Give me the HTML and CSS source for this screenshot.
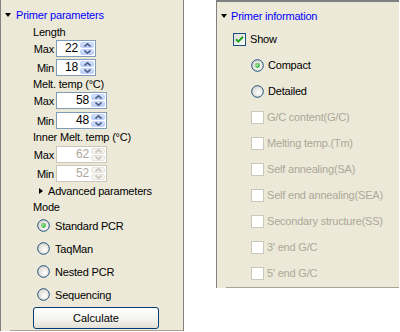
FILE: index.html
```html
<!DOCTYPE html>
<html>
<head>
<meta charset="utf-8">
<link rel="stylesheet" href="styles.css">
</head>
<body>
<div class="panel left">
  <div class="title"><span class="tri-down"></span><span class="ttl">Primer parameters</span></div>
  <div class="group">
    <div class="label first">Length</div>
    <div class="field"><span class="flabel">Max</span>
      <div class="spin"><span class="val">22</span><span class="btns"><span class="b"><svg width="7" height="4" viewBox="0 0 7 4"><path d="M0.5 3.5 L3.5 0.8 L6.5 3.5" fill="none" stroke="#4D6185" stroke-width="1.6"/></svg></span><span class="b"><svg width="7" height="4" viewBox="0 0 7 4"><path d="M0.5 0.5 L3.5 3.2 L6.5 0.5" fill="none" stroke="#4D6185" stroke-width="1.6"/></svg></span></span></div></div>
    <div class="field second"><span class="flabel">Min</span>
      <div class="spin"><span class="val">18</span><span class="btns"><span class="b"><svg width="7" height="4" viewBox="0 0 7 4"><path d="M0.5 3.5 L3.5 0.8 L6.5 3.5" fill="none" stroke="#4D6185" stroke-width="1.6"/></svg></span><span class="b"><svg width="7" height="4" viewBox="0 0 7 4"><path d="M0.5 0.5 L3.5 3.2 L6.5 0.5" fill="none" stroke="#4D6185" stroke-width="1.6"/></svg></span></span></div></div>
    <div class="label">Melt. temp (°C)</div>
    <div class="field"><span class="flabel">Max</span>
      <div class="spin wide"><span class="val">58</span><span class="btns"><span class="b"><svg width="7" height="4" viewBox="0 0 7 4"><path d="M0.5 3.5 L3.5 0.8 L6.5 3.5" fill="none" stroke="#4D6185" stroke-width="1.6"/></svg></span><span class="b"><svg width="7" height="4" viewBox="0 0 7 4"><path d="M0.5 0.5 L3.5 3.2 L6.5 0.5" fill="none" stroke="#4D6185" stroke-width="1.6"/></svg></span></span></div></div>
    <div class="field second wider"><span class="flabel">Min</span>
      <div class="spin wide"><span class="val">48</span><span class="btns"><span class="b"><svg width="7" height="4" viewBox="0 0 7 4"><path d="M0.5 3.5 L3.5 0.8 L6.5 3.5" fill="none" stroke="#4D6185" stroke-width="1.6"/></svg></span><span class="b"><svg width="7" height="4" viewBox="0 0 7 4"><path d="M0.5 0.5 L3.5 3.2 L6.5 0.5" fill="none" stroke="#4D6185" stroke-width="1.6"/></svg></span></span></div></div>
    <div class="label">Inner Melt. temp (°C)</div>
    <div class="field top1"><span class="flabel">Max</span>
      <div class="spin wide dis"><span class="val">62</span><span class="btns"><span class="b"><svg width="7" height="4" viewBox="0 0 7 4"><path d="M0.5 3.5 L3.5 0.8 L6.5 3.5" fill="none" stroke="#C9C7BA" stroke-width="1.6"/></svg></span><span class="b"><svg width="7" height="4" viewBox="0 0 7 4"><path d="M0.5 0.5 L3.5 3.2 L6.5 0.5" fill="none" stroke="#C9C7BA" stroke-width="1.6"/></svg></span></span></div></div>
    <div class="field second"><span class="flabel">Min</span>
      <div class="spin wide dis"><span class="val">52</span><span class="btns"><span class="b"><svg width="7" height="4" viewBox="0 0 7 4"><path d="M0.5 3.5 L3.5 0.8 L6.5 3.5" fill="none" stroke="#C9C7BA" stroke-width="1.6"/></svg></span><span class="b"><svg width="7" height="4" viewBox="0 0 7 4"><path d="M0.5 0.5 L3.5 3.2 L6.5 0.5" fill="none" stroke="#C9C7BA" stroke-width="1.6"/></svg></span></span></div></div>
    <div class="adv"><span class="tri-right"></span>Advanced parameters</div>
    <div class="label mode">Mode</div>
    <div class="radio"><svg class="rb" width="13" height="13" viewBox="0 0 13 13"><defs><radialGradient id="rg" cx="0.6" cy="0.6" r="0.7"><stop offset="0" stop-color="#ffffff"/><stop offset="1" stop-color="#D4D1C3"/></radialGradient><radialGradient id="dot" cx="0.4" cy="0.4" r="0.7"><stop offset="0" stop-color="#9DEB9D"/><stop offset="1" stop-color="#21A121"/></radialGradient></defs><circle cx="6.5" cy="6.5" r="5.8" fill="url(#rg)" stroke="#1C5180" stroke-width="1"/><circle cx="6.5" cy="6.5" r="2.4" fill="url(#dot)"/></svg>Standard PCR</div>
    <div class="radio"><svg class="rb" width="13" height="13" viewBox="0 0 13 13"><circle cx="6.5" cy="6.5" r="5.8" fill="url(#rg)" stroke="#1C5180" stroke-width="1"/></svg>TaqMan</div>
    <div class="radio"><svg class="rb" width="13" height="13" viewBox="0 0 13 13"><circle cx="6.5" cy="6.5" r="5.8" fill="url(#rg)" stroke="#1C5180" stroke-width="1"/></svg>Nested PCR</div>
    <div class="radio"><svg class="rb" width="13" height="13" viewBox="0 0 13 13"><circle cx="6.5" cy="6.5" r="5.8" fill="url(#rg)" stroke="#1C5180" stroke-width="1"/></svg>Sequencing</div>
  </div>
  <div class="btnrow"><button class="calc">Calculate</button></div>
  <div class="sep"></div>
</div>

<div class="panel right">
  <div class="title"><span class="tri-down"></span><span class="ttl">Primer information</span></div>
  <div class="rows">
    <div class="row show"><svg class="cb" width="13" height="13" viewBox="0 0 13 13"><defs><linearGradient id="cbg" x1="0" y1="0" x2="1" y2="1"><stop offset="0" stop-color="#DCDBD3"/><stop offset="1" stop-color="#ffffff"/></linearGradient></defs><rect x="0.5" y="0.5" width="12" height="12" fill="url(#cbg)" stroke="#1C5180"/><path d="M3 6.2 L5.3 8.6 L10 3.8" fill="none" stroke="#21A121" stroke-width="2"/></svg>Show</div>
    <div class="row sub"><svg class="rb" width="13" height="13" viewBox="0 0 13 13"><circle cx="6.5" cy="6.5" r="5.8" fill="url(#rg)" stroke="#1C5180" stroke-width="1"/><circle cx="6.5" cy="6.5" r="2.4" fill="url(#dot)"/></svg>Compact</div>
    <div class="row sub"><svg class="rb" width="13" height="13" viewBox="0 0 13 13"><circle cx="6.5" cy="6.5" r="5.8" fill="url(#rg)" stroke="#1C5180" stroke-width="1"/></svg>Detailed</div>
    <div class="row sub dis"><span class="dbox"></span>G/C content(G/C)</div>
    <div class="row sub dis"><span class="dbox"></span>Melting temp.(Tm)</div>
    <div class="row sub dis"><span class="dbox"></span>Self annealing(SA)</div>
    <div class="row sub dis"><span class="dbox"></span>Self end annealing(SEA)</div>
    <div class="row sub dis"><span class="dbox"></span>Secondary structure(SS)</div>
    <div class="row sub dis"><span class="dbox"></span>3' end G/C</div>
    <div class="row sub dis"><span class="dbox"></span>5' end G/C</div>
  </div>
  <div class="sep"></div>
</div>
</body>
</html>
```

FILE: styles.css
```css
html, body {
  margin: 0;
  padding: 0;
  background: #ffffff;
}
body {
  display: flex;
  align-items: flex-start;
  font-family: "Liberation Sans", Arial, sans-serif;
  font-size: 11px;
  letter-spacing: -0.2px;
  color: #000;
  width: 400px;
  height: 332px;
  overflow: hidden;
}
.panel {
  background: #ECE9D8;
  box-sizing: border-box;
  display: flex;
  flex-direction: column;
  flex-shrink: 0;
}
.panel > *,
.group > *,
.rows > * {
  flex-shrink: 0;
}
.left {
  width: 184px;
  height: 331px;
  border-left: 1px solid #808080;
  border-right: 1px solid #808080;
}
.right {
  margin-left: 32px;
  width: 183px;
  height: 288px;
  border-left: 1px solid #808080;
  border-top: 2px solid #808080;
}
.title {
  display: flex;
  align-items: center;
  height: 16px;
  margin-top: 7px;
}
.right .title {
  margin-top: 6px;
}
.tri-down {
  width: 0;
  height: 0;
  border-left: 3.5px solid transparent;
  border-right: 3.5px solid transparent;
  border-top: 4px solid #000;
  margin-left: 4px;
  margin-right: 5px;
}
.right .tri-down {
  margin-left: 4px;
  margin-right: 4px;
}
.ttl {
  color: #0000FF;
}
.group {
  padding-left: 32px;
  display: flex;
  flex-direction: column;
}
.label {
  height: 16px;
  line-height: 16px;
}
.label.first {
  margin-top: 1px;
}
.field {
  display: flex;
  align-items: center;
  height: 17px;
}
.field.second {
  margin-top: 2px;
}
.field.second.wider {
  margin-top: 3px;
}
.field.top1 {
  margin-top: 1px;
}
.flabel {
  width: 21px;
  text-align: right;
  margin-right: 2px;
}
.spin {
  box-sizing: border-box;
  width: 40px;
  height: 17px;
  border: 1px solid #7F9DB9;
  background: #fff;
  display: flex;
}
.spin.wide {
  width: 51px;
}
.val {
  flex: 1;
  text-align: right;
  line-height: 15px;
  padding-right: 2px;
  font-size: 12px;
}
.btns {
  width: 14px;
  display: flex;
  flex-direction: column;
  padding: 1px 1px 1px 0;
  gap: 1px;
}
.b {
  flex: 1;
  display: flex;
  align-items: center;
  justify-content: center;
  border-radius: 2px;
  background: linear-gradient(#D9E4FD, #B7CBF6);
  border: 1px solid #C3D3FD;
  box-sizing: border-box;
}
.dis {
  color: #ACA899;
}
.spin.dis {
  border-color: #C9C7BA;
}
.spin.dis .b {
  background: #F4F3EE;
  border-color: #E8E6DC;
}
.adv {
  display: flex;
  align-items: center;
  height: 16px;
  margin-top: 1px;
  padding-left: 6px;
}
.tri-right {
  width: 0;
  height: 0;
  border-top: 3.5px solid transparent;
  border-bottom: 3.5px solid transparent;
  border-left: 4px solid #000;
  margin-right: 5px;
}
.label.mode {
  height: 15px;
  line-height: 16px;
}
.radio {
  display: flex;
  align-items: center;
  height: 23px;
  padding-left: 4px;
}
.rb {
  margin-right: 5px;
}
.btnrow {
  padding-left: 32px;
  margin-top: 1px;
}
.calc {
  box-sizing: border-box;
  display: block;
  width: 126px;
  height: 22px;
  border: 1px solid #003C74;
  border-radius: 3px;
  background: linear-gradient(#FFFFFF 0%, #F3F2EC 60%, #E2DFD4 100%);
  font-family: "Liberation Sans", Arial, sans-serif;
  font-size: 11px;
  color: #000;
  padding: 0;
}
.sep {
  margin-top: auto;
  margin-left: 9px;
  height: 1px;
  background: #A5A39A;
}
.right .rows {
  display: flex;
  flex-direction: column;
  margin-top: 2px;
}
.row {
  display: flex;
  align-items: center;
  height: 26px;
}
.row.show {
  padding-left: 16px;
}
.row.show .cb {
  margin-right: 4px;
}
.row.sub {
  padding-left: 34px;
}
.row.sub .rb {
  margin-right: 4px;
}
.dbox {
  box-sizing: border-box;
  width: 13px;
  height: 13px;
  border: 1px solid #CAC8BB;
  background: #fff;
  margin-right: 3px;
}
```
